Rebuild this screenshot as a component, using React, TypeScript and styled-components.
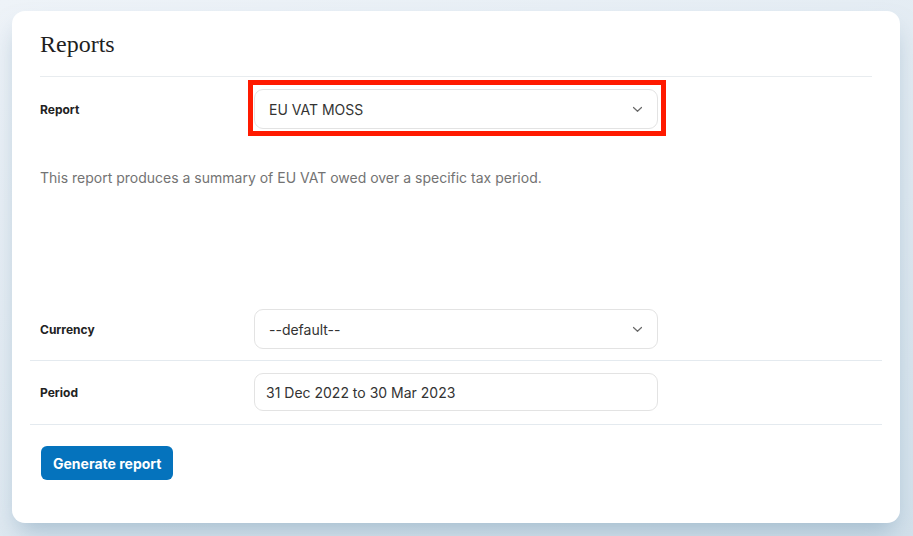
import React from "react";
import styled, { css, createGlobalStyle } from "styled-components";

const GlobalStyle = createGlobalStyle`
  html, body {
    margin: 0;
    padding: 0;
  }
  body {
    font-family: Inter, "Noto Sans", sans-serif;
    background: linear-gradient(160deg, #eef3f8 0%, #dfe9f1 60%, #d3e1eb 100%);
    min-height: 536px;
  }
`;

const Page = styled.div`
  padding: 11px 13px 13px 12px;
`;

const Card = styled.div`
  background: #ffffff;
  border-radius: 13px;
  padding: 18px 18px 43px;
  box-shadow: 0 14px 24px -6px rgba(120, 155, 180, 0.55);
`;

const Header = styled.div`
  margin: 0 10px;
  padding-bottom: 17px;
  border-bottom: 1px solid #e8ecef;
`;

const Title = styled.h1`
  margin: 0;
  font-family: "Liberation Serif", "DejaVu Serif", serif;
  font-weight: 400;
  font-size: 24px;
  line-height: 30px;
  color: #1f1f1f;
`;

const Row = styled.div<{ $divider?: boolean; $pad?: string }>`
  display: flex;
  align-items: center;
  padding: ${(p) => p.$pad ?? "12px 10px"};
  border-bottom: ${(p) => (p.$divider ? "1px solid #e4eaef" : "none")};
`;

const Label = styled.div`
  width: 214px;
  flex-shrink: 0;
  font-size: 12px;
  font-weight: 700;
  color: #222;
`;

const Field = styled.div<{ $height?: number; $highlight?: boolean; $indent?: number }>`
  position: relative;
  box-sizing: border-box;
  width: 404px;
  height: ${(p) => p.$height ?? 40}px;
  display: flex;
  align-items: center;
  justify-content: space-between;
  padding: 0 14px 0 ${(p) => p.$indent ?? 14}px;
  border: 1px solid #e3e3e3;
  border-radius: 9px;
  background: #fff;
  font-size: 14px;
  color: #333;

  ${(p) =>
    p.$highlight &&
    css`
      &::after {
        content: "";
        position: absolute;
        top: -10px;
        bottom: -8px;
        left: -7px;
        right: -9px;
        border: 5px solid #ff1a00;
        pointer-events: none;
      }
    `}
`;

const Chevron = () => (
  <svg width="11" height="7" viewBox="0 0 11 7" fill="none">
    <path
      d="M1.5 1.5 5.5 5.3 9.5 1.5"
      stroke="#6a6a6a"
      strokeWidth="1.2"
      strokeLinecap="round"
      strokeLinejoin="round"
    />
  </svg>
);

const Description = styled.p`
  margin: 39px 10px 121px;
  font-size: 14px;
  line-height: 20px;
  color: #737373;
`;

const Actions = styled.div`
  padding: 21px 11px 0;
`;

const Button = styled.button`
  height: 34px;
  padding: 0 12px;
  border: none;
  border-radius: 6px;
  background: #0573bd;
  color: #fff;
  font-family: Inter, "Noto Sans", sans-serif;
  font-size: 14px;
  font-weight: 700;
  cursor: pointer;
`;

export default function App() {
  return (
    <>
      <GlobalStyle />
      <Page>
        <Card>
          <Header>
            <Title>Reports</Title>
          </Header>
          <Row $pad="12px 10px 0">
            <Label>Report</Label>
            <Field $highlight>
              <span>EU VAT MOSS</span>
              <Chevron />
            </Field>
          </Row>
          <Description>
            This report produces a summary of EU VAT owed over a specific tax
            period.
          </Description>
          <Row $divider $pad="0 10px 11px">
            <Label>Currency</Label>
            <Field>
              <span>--default--</span>
              <Chevron />
            </Field>
          </Row>
          <Row $divider $pad="12px 10px 13px">
            <Label>Period</Label>
            <Field $height={38} $indent={11}>
              <span>31 Dec 2022 to 30 Mar 2023</span>
            </Field>
          </Row>
          <Actions>
            <Button>Generate report</Button>
          </Actions>
        </Card>
      </Page>
    </>
  );
}
